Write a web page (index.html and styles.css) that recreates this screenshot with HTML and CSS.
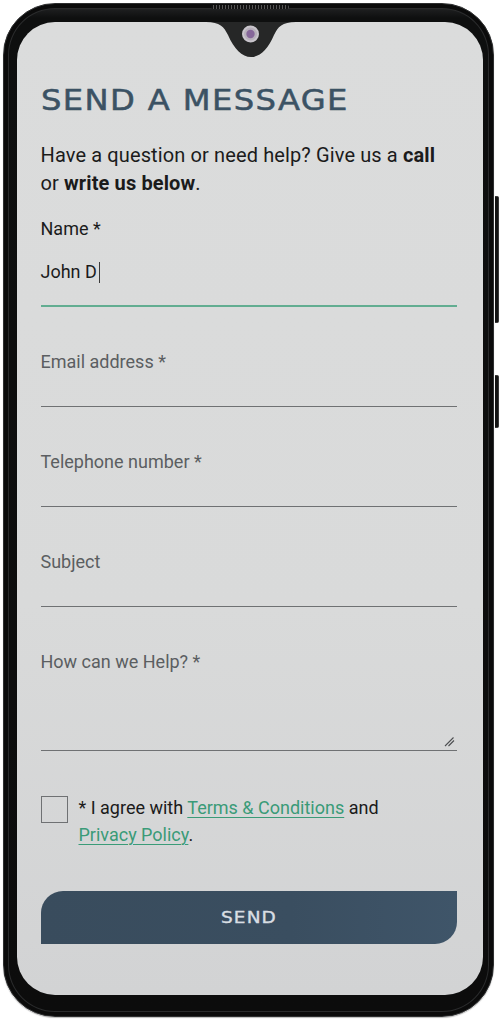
FILE: index.html
```html
<!DOCTYPE html>
<html lang="en">
<head>
<meta charset="utf-8">
<title>Send a message</title>
<link rel="stylesheet" href="styles.css">
</head>
<body>
<div class="phone">
  <div class="speaker"></div>
  <div class="side-btn side-btn-power"></div>
  <div class="side-btn side-btn-vol"></div>
  <div class="screen">
    <svg class="notch" width="90" height="37" viewBox="0 0 90 37" aria-hidden="true">
      <path d="M0 0 C14 0 18 5 22 13 C28 27 36 35 45 35 C54 35 62 27 68 13 C72 5 76 0 90 0 Z" fill="#262727"/>
      <circle cx="44.5" cy="12" r="8.5" fill="#c9c5cc"/>
      <circle cx="44.5" cy="12" r="6.5" fill="#b7b0bb"/>
      <circle cx="44.5" cy="12" r="4.2" fill="#86679a"/>
    </svg>
    <h1 class="title"><span class="title-text">SEND A MESSAGE</span></h1>
    <p class="intro">Have a question or need help? Give us a <b>call</b> or <b>write us below</b>.</p>
    <div class="field field-filled">
      <div class="field-label">Name *</div>
      <div class="field-value">John D<span class="caret"></span></div>
    </div>
    <div class="field"><div class="field-ph">Email address *</div></div>
    <div class="field"><div class="field-ph">Telephone number *</div></div>
    <div class="field"><div class="field-ph">Subject</div></div>
    <div class="field field-area">
      <div class="field-ph">How can we Help? *</div>
      <svg class="grip" width="11" height="11" viewBox="0 0 11 11" aria-hidden="true">
        <path d="M1 10 L9.5 1.5 M4.5 10 L10 4.5" stroke="#4d4f51" stroke-width="1.1" fill="none"/>
      </svg>
    </div>
    <div class="agree">
      <span class="checkbox"></span>
      <p class="agree-text">* I agree with <a href="#">Terms &amp; Conditions</a> and<br><a href="#">Privacy Policy</a>.</p>
    </div>
    <button class="send" type="button"><span class="send-label">SEND</span></button>
  </div>
</div>
</body>
</html>
```

FILE: styles.css
```css
* { box-sizing: border-box; }
html, body { margin: 0; padding: 0; background: #ffffff; }
body { width: 500px; height: 1019px; overflow: hidden; }

.phone {
  position: relative;
  margin: 3px 0 0 3px;
  width: 491px;
  height: 1014px;
  padding: 17.5px 10.5px 21.5px 12.5px;
  border-radius: 52px;
  background: linear-gradient(180deg, #4a4b4c 0px, #1c1d1e 6px, #0e0f0f 14px, #0c0c0c 100%);
  border: 1.5px solid #2e2f30;
  box-shadow: inset 0 0 0 4px #0b0b0b, inset 0 0 0 5px #2a2b2c, 0 1px 1px #bdbdbd;
}
.speaker {
  position: absolute;
  top: 1px;
  left: 207px;
  width: 78px;
  height: 4px;
  border-radius: 2px;
  background: repeating-linear-gradient(90deg, #111 0 2px, #555 2px 3px);
}
.side-btn {
  position: absolute;
  right: -6px;
  width: 4px;
  border-radius: 0 2px 2px 0;
  background: #141414;
  border: 1px solid #3a3a3a;
  border-left: none;
}
.side-btn-power { top: 192px; height: 127px; }
.side-btn-vol { top: 371px; height: 53px; }

.screen {
  position: relative;
  height: 100%;
  border-radius: 38px;
  overflow: hidden;
  padding: 62px 26px 0 24px;
  background: linear-gradient(180deg, #dbdcdc 0%, #d9dada 60%, #d2d3d4 100%);
  font-family: Roboto, "Noto Sans", "Liberation Sans", sans-serif;
  color: #1b1b1b;
}
.notch {
  position: absolute;
  top: 0;
  left: 189px;
}

.title {
  margin: 0;
  font-family: "DejaVu Sans", "Liberation Sans", sans-serif;
  font-weight: 400;
  font-size: 28px;
  line-height: 34px;
  color: #3b5264;
  white-space: nowrap;
}
.title-text {
  display: inline-block;
  letter-spacing: 1.2px;
  transform: scaleX(1.15);
  transform-origin: left center;
  -webkit-text-stroke: 0.5px #3b5264;
}
.intro {
  margin: 23.5px 0 0;
  font-size: 20px;
  line-height: 28px;
  letter-spacing: 0.12px;
  color: #1b1b1b;
}
.intro b { font-weight: 700; }

.field {
  position: relative;
  padding: 41px 0 30px;
  border-bottom: 1px solid #6f7173;
  font-size: 18px;
  line-height: 28px;
}
.field-filled {
  margin-top: 18px;
  padding: 0 0 18.5px;
  border-bottom: 2px solid #62ad91;
}
.field-label { color: #1b1b1b; }
.field-value { margin-top: 15px; color: #1b1b1b; }
.caret {
  display: inline-block;
  width: 1px;
  height: 21px;
  margin-left: 2px;
  vertical-align: -5px;
  background: #3a3a3a;
}
.field-ph { color: #5b5e61; }
.field-area { padding-bottom: 74px; }
.grip {
  position: absolute;
  right: 2px;
  bottom: 3px;
}

.agree {
  display: flex;
  align-items: flex-start;
  gap: 11px;
  margin-top: 43px;
}
.checkbox {
  flex: none;
  width: 27px;
  height: 27px;
  margin-top: 2.5px;
  border: 1.2px solid #6f7173;
  background: transparent;
}
.agree-text {
  margin: 0;
  font-size: 18px;
  line-height: 27px;
  color: #1b1b1b;
}
.agree-text a {
  color: #3a9b78;
  text-decoration: underline;
  text-underline-offset: 3px;
  text-decoration-thickness: 1px;
}

.send {
  display: block;
  width: 100%;
  height: 53px;
  margin-top: 43px;
  padding: 0;
  border: none;
  border-radius: 22px 0 22px 0;
  background: linear-gradient(90deg, #394c5d 0%, #3a4e60 60%, #3f5569 100%);
  color: #d9dee3;
  font-family: "DejaVu Sans", "Liberation Sans", sans-serif;
  font-size: 16.5px;
  line-height: 53px;
}
.send-label {
  display: inline-block;
  letter-spacing: 1px;
  transform: scaleX(1.12);
  -webkit-text-stroke: 0.4px #d9dee3;
}
```
